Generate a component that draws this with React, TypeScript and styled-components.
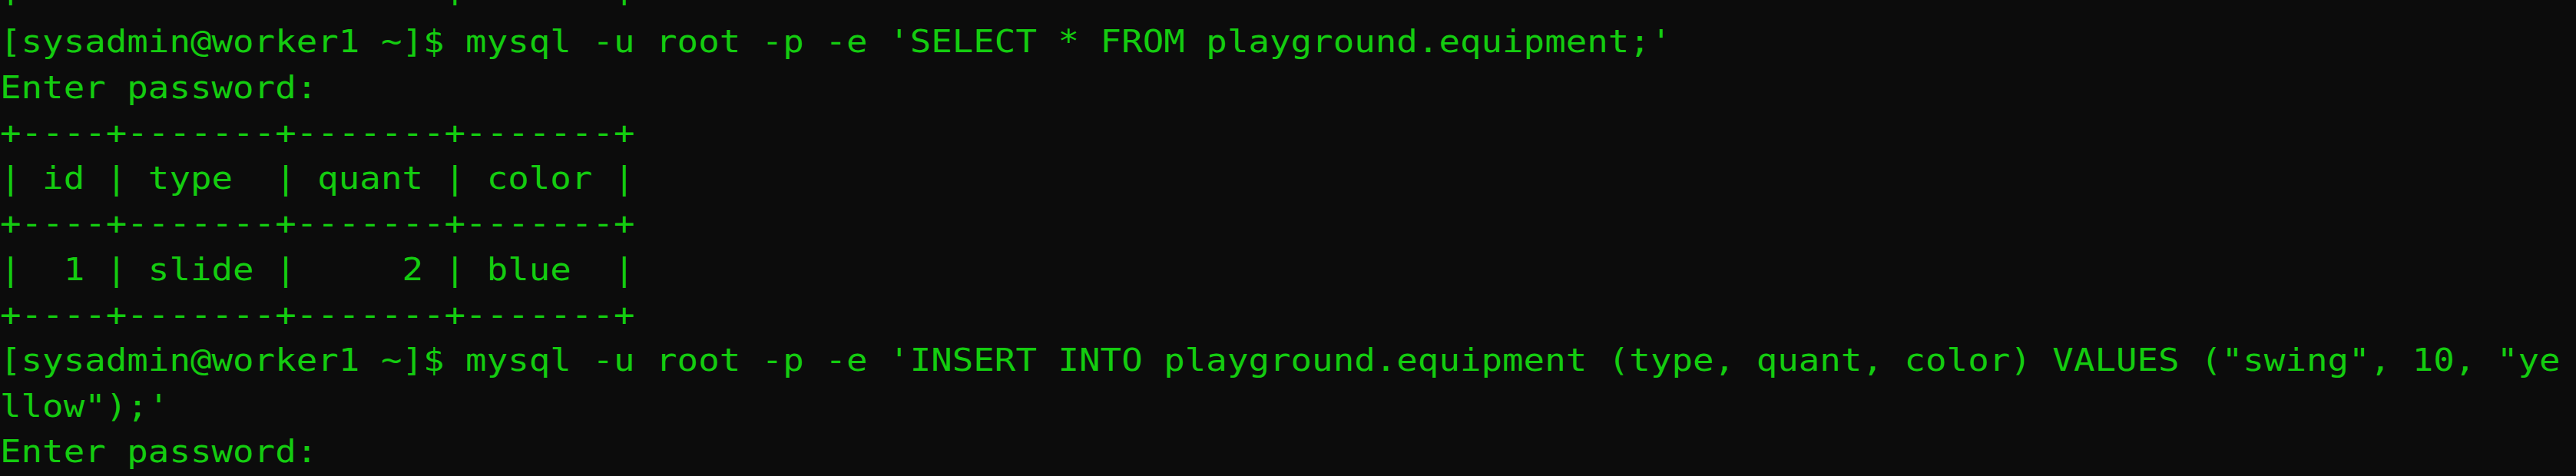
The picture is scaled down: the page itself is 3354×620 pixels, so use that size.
import React from "react";
import styled, { createGlobalStyle } from "styled-components";

const GlobalStyle = createGlobalStyle`
  html, body {
    margin: 0;
    padding: 0;
    background: #0c0c0c;
  }
  #root {
    width: 3354px;
    height: 620px;
  }
`;

const Screen = styled.div`
  width: 3354px;
  height: 620px;
  background: #0c0c0c;
  overflow: hidden;
`;

const Output = styled.div`
  margin-top: -34px;
  font-family: "DejaVu Sans Mono", "Liberation Mono", monospace;
  font-size: 40px;
  line-height: 59.3px;
  color: #14cc10;
  white-space: pre;
  transform: scaleX(1.144);
  transform-origin: 0 0;
`;

const Line = styled.div<{ $scrolled?: boolean }>`
  height: 59.3px;
  line-height: ${(p) => (p.$scrolled ? "35px" : "59.3px")};
`;

const lines: string[] = [
  "|                    |       |",
  "[sysadmin@worker1 ~]$ mysql -u root -p -e 'SELECT * FROM playground.equipment;'",
  "Enter password:",
  "+----+-------+-------+-------+",
  "| id | type  | quant | color |",
  "+----+-------+-------+-------+",
  "|  1 | slide |     2 | blue  |",
  "+----+-------+-------+-------+",
  "[sysadmin@worker1 ~]$ mysql -u root -p -e 'INSERT INTO playground.equipment (type, quant, color) VALUES (\"swing\", 10, \"ye",
  "llow\");'",
  "Enter password:",
];

export default function App() {
  return (
    <>
      <GlobalStyle />
      <Screen>
        <Output>
          {lines.map((l, i) => (
            <Line key={i} $scrolled={i === 0}>
              {l}
            </Line>
          ))}
        </Output>
      </Screen>
    </>
  );
}
